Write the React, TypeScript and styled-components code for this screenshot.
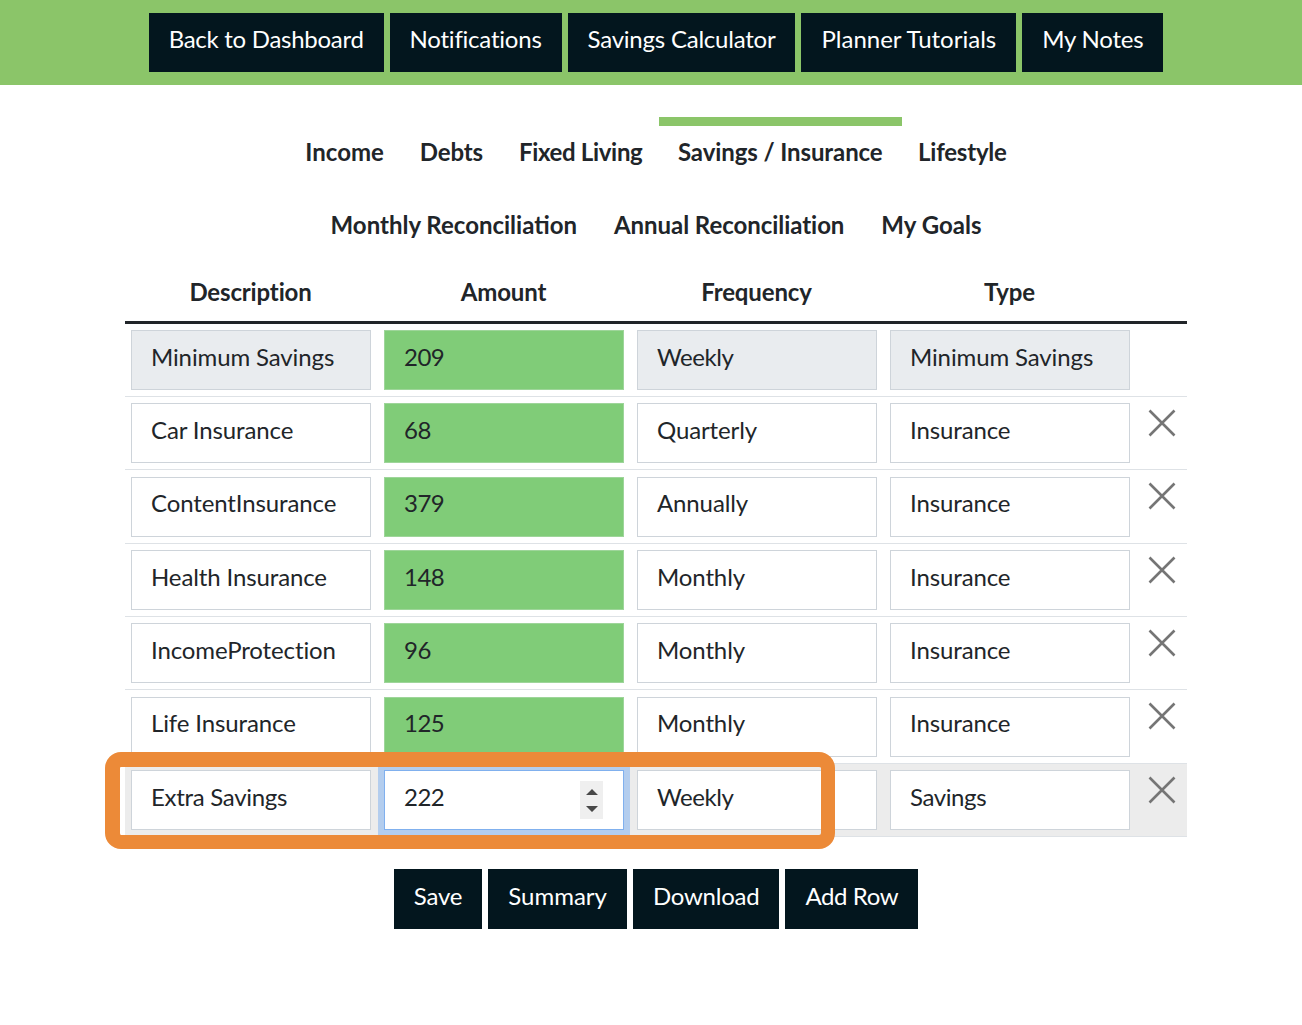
import React from "react";
import styled, { createGlobalStyle } from "styled-components";

const Global = createGlobalStyle`
  html, body { margin: 0; padding: 0; background: #fff; }
  body { font-family: Lato, "Liberation Sans", sans-serif; color: #212529; font-size: 24px; overflow: hidden; }
  * { box-sizing: border-box; }
`;

const Page = styled.div`
  width: 1302px;
  height: 1025px;
  background: #fff;
`;

const TopBar = styled.nav`
  height: 85px;
  background: #8bc569;
  display: flex;
  justify-content: center;
  gap: 6px;
  padding: 13px 0 0 10px;
`;

const DarkButton = styled.button<{ $h: number; $track: number }>`
  height: ${(p) => p.$h}px;
  padding: 0 20px 7px;
  border: 0;
  background: #03161e;
  color: #fff;
  font-family: inherit;
  font-size: 24px;
  line-height: 1;
  letter-spacing: ${(p) => p.$track}px;
  white-space: nowrap;
`;

const Tabs = styled.div`
  padding-top: 32px;
`;

const TabRow = styled.div`
  height: 73px;
  display: flex;
  justify-content: center;
  padding-left: 10px;
`;

const Tab = styled.div<{ $active?: boolean; $track: number; $pad: number }>`
  height: 73px;
  padding: 9px ${(p) => (p.$active ? 19 : p.$pad)}px 0;
  margin: 0 ${(p) => (p.$active ? "-1.5px" : "0")};
  border-top: 9px solid ${(p) => (p.$active ? "#8bc569" : "transparent")};
  font-weight: 700;
  color: #212529;
  line-height: 34px;
  letter-spacing: ${(p) => p.$track}px;
  white-space: nowrap;
`;

const Table = styled.div`
  position: relative;
  width: 1062px;
  margin-left: 125px;
`;

const HeaderRow = styled.div`
  display: grid;
  grid-template-columns: repeat(4, 253px) 50px;
  height: 60.8px;
  border-bottom: 3px solid #212529;
  align-items: center;
`;

const HeaderCell = styled.div`
  text-align: center;
  font-weight: 700;
  padding: 0 2px 1px 0;
  letter-spacing: -0.15px;
`;

const Row = styled.div<{ $selected?: boolean }>`
  display: grid;
  grid-template-columns: repeat(4, 253px) 50px;
  height: 73.33px;
  padding-top: 6.2px;
  border-bottom: 1px solid #dee2e6;
  background: ${(p) => (p.$selected ? "#ececec" : "transparent")};
  &:last-of-type { border-bottom: 0; }
`;

const Cell = styled.div`
  padding: 0 6px;
`;

const Field = styled.div<{ $variant?: "plain" | "locked" | "money" | "focus"; $track?: number }>`
  position: relative;
  width: 240px;
  height: 60px;
  padding: 0 19px 7.8px;
  display: flex;
  align-items: center;
  color: #212529;
  letter-spacing: ${(p) => p.$track ?? -0.12}px;
  border: 1px solid
    ${(p) => (p.$variant === "money" ? "#9ed59a" : p.$variant === "focus" ? "#80b0ee" : "#ced4da")};
  background: ${(p) =>
    p.$variant === "locked" ? "#e9ecef" : p.$variant === "money" ? "#80cc78" : "#fff"};
  box-shadow: ${(p) => (p.$variant === "focus" ? "0 0 0 6px #b3cdee" : "none")};
  white-space: nowrap;
`;

const Spinner = styled.svg`
  position: absolute;
  right: 20px;
  top: 10px;
  background: #efefef;
`;

const DeleteCell = styled.div`
  padding: 5.6px 0 0 11px;
  line-height: 0;
`;

const Actions = styled.div`
  display: flex;
  justify-content: center;
  gap: 6px;
  margin-top: 32px;
  padding-left: 10px;
`;

const Highlight = styled.div`
  position: absolute;
  left: -20px;
  top: 489px;
  width: 730px;
  height: 97px;
  border: 14px solid #ec8a38;
  border-width: 15px 14px 14px 15px;
  border-radius: 16px;
  pointer-events: none;
`;

const Close = () => (
  <svg width="28" height="28" viewBox="0 0 28 28" fill="none" stroke="#757575" strokeWidth="2.6">
    <path d="M1.5 1.5 L26.5 26.5 M26.5 1.5 L1.5 26.5" />
  </svg>
);

const nav: [string, number][] = [
  ["Back to Dashboard", -0.28],
  ["Notifications", -0.22],
  ["Savings Calculator", -0.22],
  ["Planner Tutorials", 0],
  ["My Notes", -0.22],
];
const tabs1: [string, number][] = [
  ["Income", 0],
  ["Debts", -0.15],
  ["Fixed Living", -0.33],
  ["Savings / Insurance", -0.1],
  ["Lifestyle", -0.22],
];
const tabs2: [string, number][] = [
  ["Monthly Reconciliation", 0],
  ["Annual Reconciliation", -0.05],
  ["My Goals", 0],
];
const actions: [string, number][] = [
  ["Save", -0.2],
  ["Summary", 0],
  ["Download", -0.25],
  ["Add Row", -0.4],
];
const heads = ["Description", "Amount", "Frequency", "Type"];
const rows = [
  ["Minimum Savings", "209", "Weekly", "Minimum Savings"],
  ["Car Insurance", "68", "Quarterly", "Insurance"],
  ["ContentInsurance", "379", "Annually", "Insurance"],
  ["Health Insurance", "148", "Monthly", "Insurance"],
  ["IncomeProtection", "96", "Monthly", "Insurance"],
  ["Life Insurance", "125", "Monthly", "Insurance"],
  ["Extra Savings", "222", "Weekly", "Savings"],
];
const NUMBER_TRACK = -0.5;
const fieldTrack: Record<string, number> = {
  "Extra Savings": -0.3,
  Weekly: -0.45,
  Savings: -0.4,
};

export default function App() {
  return (
    <Page>
      <Global />
      <TopBar>
        {nav.map(([n, t]) => (
          <DarkButton key={n} $h={59} $track={t}>{n}</DarkButton>
        ))}
      </TopBar>
      <Tabs>
        <TabRow>
          {tabs1.map(([n, t]) => (
            <Tab key={n} $track={t} $pad={18} $active={n === "Savings / Insurance"}>{n}</Tab>
          ))}
        </TabRow>
        <TabRow>
          {tabs2.map(([n, t]) => (
            <Tab key={n} $track={t} $pad={18.5}>{n}</Tab>
          ))}
        </TabRow>
      </Tabs>
      <Table>
        <HeaderRow>
          {heads.map((h) => (
            <HeaderCell key={h}>{h}</HeaderCell>
          ))}
          <div />
        </HeaderRow>
        {rows.map((r, i) => {
          const locked = i === 0;
          const selected = i === rows.length - 1;
          return (
            <Row key={r[0]} $selected={selected}>
              <Cell><Field $variant={locked ? "locked" : "plain"} $track={fieldTrack[r[0]]}>{r[0]}</Field></Cell>
              <Cell>
                <Field $variant={selected ? "focus" : "money"} $track={NUMBER_TRACK}>
                  {r[1]}
                  {selected && (
                    <Spinner width="23" height="38" viewBox="0 0 23 38">
                      <path d="M12 8 L18 14 L6 14 Z M6 25 L18 25 L12 31 Z" fill="#484848" />
                    </Spinner>
                  )}
                </Field>
              </Cell>
              <Cell><Field $variant={locked ? "locked" : "plain"} $track={fieldTrack[r[2]]}>{r[2]}</Field></Cell>
              <Cell><Field $variant={locked ? "locked" : "plain"} $track={fieldTrack[r[3]]}>{r[3]}</Field></Cell>
              <DeleteCell>{!locked && <Close />}</DeleteCell>
            </Row>
          );
        })}
        <Highlight />
      </Table>
      <Actions>
        {actions.map(([n, t]) => (
          <DarkButton key={n} $h={60} $track={t}>{n}</DarkButton>
        ))}
      </Actions>
    </Page>
  );
}
